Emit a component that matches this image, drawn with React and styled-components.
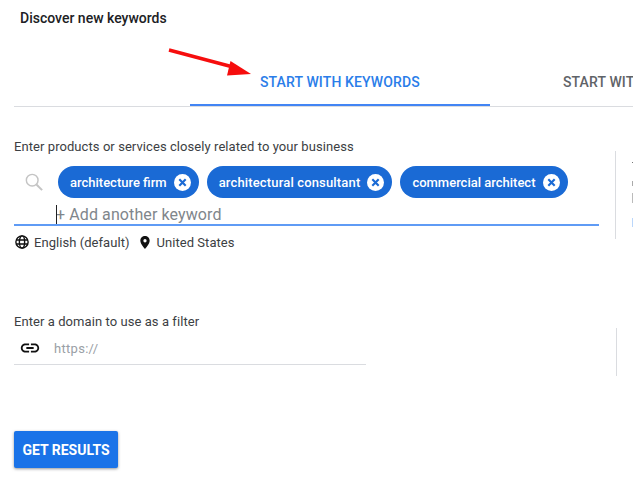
import React from "react";
import styled, { createGlobalStyle } from "styled-components";

const Global = createGlobalStyle`
  html, body { margin: 0; padding: 0; background: #fff; overflow: hidden; }
  body { font-family: Roboto, "Liberation Sans", sans-serif; color: #3c4043; }
`;
const Page = styled.div`
  position: relative; width: 633px; height: 478px; overflow: hidden;
  display: flex; flex-direction: column; padding-left: 14px; box-sizing: border-box;
`;
const Title = styled.h1`
  margin: 0; padding: 10px 0 0 6px; height: 46px; box-sizing: border-box;
  font-size: 14px; line-height: 16px; font-weight: 500; color: #202124;
`;
const Tabs = styled.div`
  display: flex; height: 60px; padding-left: 176px; border-bottom: 1px solid #dadce0;
  flex-shrink: 0;
`;
const Tab = styled.div`
  flex: 0 0 300px; box-sizing: border-box; height: 60px; padding: 21px 0 0 ${p => p.$active ? 70 : 73}px;
  font-size: 14px; line-height: 30px; font-weight: 500; white-space: nowrap; letter-spacing: .12px;
  color: ${p => p.$active ? "#2a7de9" : "#5f6368"};
  border-bottom: ${p => p.$active ? "2px solid #4285f4" : "none"};
`;
const Arrow = styled.svg`
  position: absolute; left: 165px; top: 44px;
`;
const Row = styled.div`
  display: flex; align-items: flex-start;
`;
const Column = styled.div`
  width: ${p => p.$w}px; flex-shrink: 0;
`;
const Label = styled.div`
  font-size: 13px; line-height: 16px; color: #3c4043; letter-spacing: .07px;
`;
const KeywordSection = styled(Row)`
  padding-top: 32px;
`;
const ChipRow = styled.div`
  display: flex; align-items: center; gap: 8px; padding: 11px 0 0 11px; height: 32px;
`;
const SearchSlot = styled.div`
  width: 25px; display: flex; align-items: center;
`;
const Chip = styled.div`
  display: flex; align-items: center; justify-content: space-between; height: 32px; box-sizing: border-box;
  padding: 0 8px 0 12px; border-radius: 16px; background: #1a6ad5; color: #fff;
  font-size: 13px; font-weight: 500; white-space: nowrap; gap: 7px; letter-spacing: ${p => p.$track}px;
`;
const ChipClose = styled.svg`
  width: 17px; height: 17px; flex-shrink: 0;
`;
const KeywordInput = styled.div`
  height: 26px; margin-top: 2px; box-sizing: border-box; padding-left: 42px; border-bottom: 2px solid #5f9bf5;
  font-size: 16px; line-height: 29px; color: #80868b; white-space: nowrap; position: relative; letter-spacing: .1px;
`;
const Caret = styled.span`
  position: absolute; left: 42px; top: 5px; width: 1px; height: 19px; background: #202124;
`;
const Meta = styled.div`
  display: flex; align-items: center; height: 16px; margin-top: 8px; padding-left: 1px;
  font-size: 13px; color: #3c4043; letter-spacing: .05px;
`;
const MetaItem = styled.span`
  display: inline-flex; align-items: center; gap: 5px; margin-right: 8px; white-space: nowrap;
`;
const Divider = styled.div`
  width: 1px; height: ${p => p.$h}px; background: #dadce0; flex-shrink: 0; margin-left: ${p => p.$ml}px; margin-top: ${p => p.$mt}px;
`;
const Peek = styled.div`
  display: flex; flex-direction: column; flex-shrink: 0; margin: 23px 0 0 16px; width: 1px;
`;
const PeekBit = styled.span`
  width: 1px; height: ${p => p.$h}px; margin-top: ${p => p.$mt}px; background: ${p => p.$c};
`;
const DomainSection = styled(Row)`
  margin-top: 64px;
`;
const DomainInput = styled.div`
  display: flex; align-items: center; height: 32px; margin-top: 3px; box-sizing: border-box;
  border-bottom: 1px solid #dadce0; padding: 0 0 1px 5px; gap: 13px;
  font-size: 13px; color: #9aa0a6; letter-spacing: .3px;
`;
const Button = styled.button`
  align-self: flex-start; margin-top: 55px; width: 104px; height: 37px; padding: 0; border: 0; border-radius: 2px;
  background: #1a73e8; color: #fff; font-family: inherit; font-size: 14px; font-weight: 700;
  box-shadow: 0 1px 3px rgba(60,64,67,.55);
`;

const Close = () => (
  <ChipClose viewBox="0 0 16 16">
    <circle cx="8" cy="8" r="8" fill="#fff" />
    <path d="M5 5l6 6M11 5l-6 6" stroke="#1a6ad5" strokeWidth="2" />
  </ChipClose>
);

const chips = [
  { text: "architecture firm", track: 0 },
  { text: "architectural consultant", track: 0.16 },
  { text: "commercial architect", track: 0 },
];

export default function App() {
  return (
    <Page>
      <Global />
      <Title>Discover new keywords</Title>
      <Tabs>
        <Tab $active>START WITH KEYWORDS</Tab>
        <Tab>START WITH A WEBSITE</Tab>
      </Tabs>
      <Arrow width="90" height="36" viewBox="0 0 90 36">
        <path d="M4 6 L68 23" stroke="#f60d0d" strokeWidth="3.500" fill="none" />
        <path d="M86 30 L65.500 17 L62 31.500 Z" fill="#f60d0d" />
      </Arrow>
      <KeywordSection>
        <Column $w={585}>
          <Label>Enter products or services closely related to your business</Label>
          <ChipRow>
            <SearchSlot>
              <svg width="18" height="18" viewBox="0 0 20 20" fill="none" stroke="#c4c4c4" strokeWidth="1.6">
                <circle cx="8" cy="8" r="6.500" />
                <path d="M12.700 12.700L19 19" strokeWidth="2.200" />
              </svg>
            </SearchSlot>
            {chips.map(c => (
              <Chip key={c.text} $track={c.track}>{c.text}<Close /></Chip>
            ))}
          </ChipRow>
          <KeywordInput><Caret />+ Add another keyword</KeywordInput>
          <Meta>
            <MetaItem>
              <svg width="14" height="14" viewBox="0 0 24 24" fill="none" stroke="#111" strokeWidth="2.400">
                <circle cx="12" cy="12" r="10.500" />
                <ellipse cx="12" cy="12" rx="4.500" ry="10.500" />
                <path d="M2 8.500h20M2 15.500h20" />
              </svg>
              English (default)
            </MetaItem>
            <MetaItem>
              <svg width="14" height="15" viewBox="0 0 24 24" fill="#111">
                <path d="M12 1C7.600 1 4 4.600 4 9c0 5.800 8 14 8 14s8-8.200 8-14c0-4.400-3.600-8-8-8zm0 10.800A2.800 2.800 0 1 1 12 6.200a2.800 2.800 0 0 1 0 5.600z" />
              </svg>
              United States
            </MetaItem>
          </Meta>
        </Column>
        <Divider $ml={16} $mt={12} $h={88} />
        <Peek>
          <PeekBit $h={1} $mt={0} $c="#777" />
          <PeekBit $h={5} $mt={18} $c="#aaa" />
          <PeekBit $h={10} $mt={7} $c="#bbb" />
          <PeekBit $h={9} $mt={15} $c="#bbd7fb" />
        </Peek>
      </KeywordSection>
      <DomainSection>
        <Column $w={352}>
          <Label>Enter a domain to use as a filter</Label>
          <DomainInput>
            <svg width="22" height="22" viewBox="0 0 24 24" fill="#111">
              <path d="M3.900 12c0-1.710 1.390-3.100 3.100-3.100h4V7H7c-2.760 0-5 2.240-5 5s2.240 5 5 5h4v-1.900H7c-1.710 0-3.100-1.390-3.100-3.100zM8 13h8v-2H8v2zm9-6h-4v1.900h4c1.710 0 3.100 1.390 3.100 3.100s-1.390 3.100-3.100 3.100h-4V17h4c2.760 0 5-2.240 5-5s-2.240-5-5-5z" />
            </svg>
            https://
          </DomainInput>
        </Column>
        <Divider $ml={250} $mt={14} $h={48} />
      </DomainSection>
      <Button>GET RESULTS</Button>
    </Page>
  );
}
